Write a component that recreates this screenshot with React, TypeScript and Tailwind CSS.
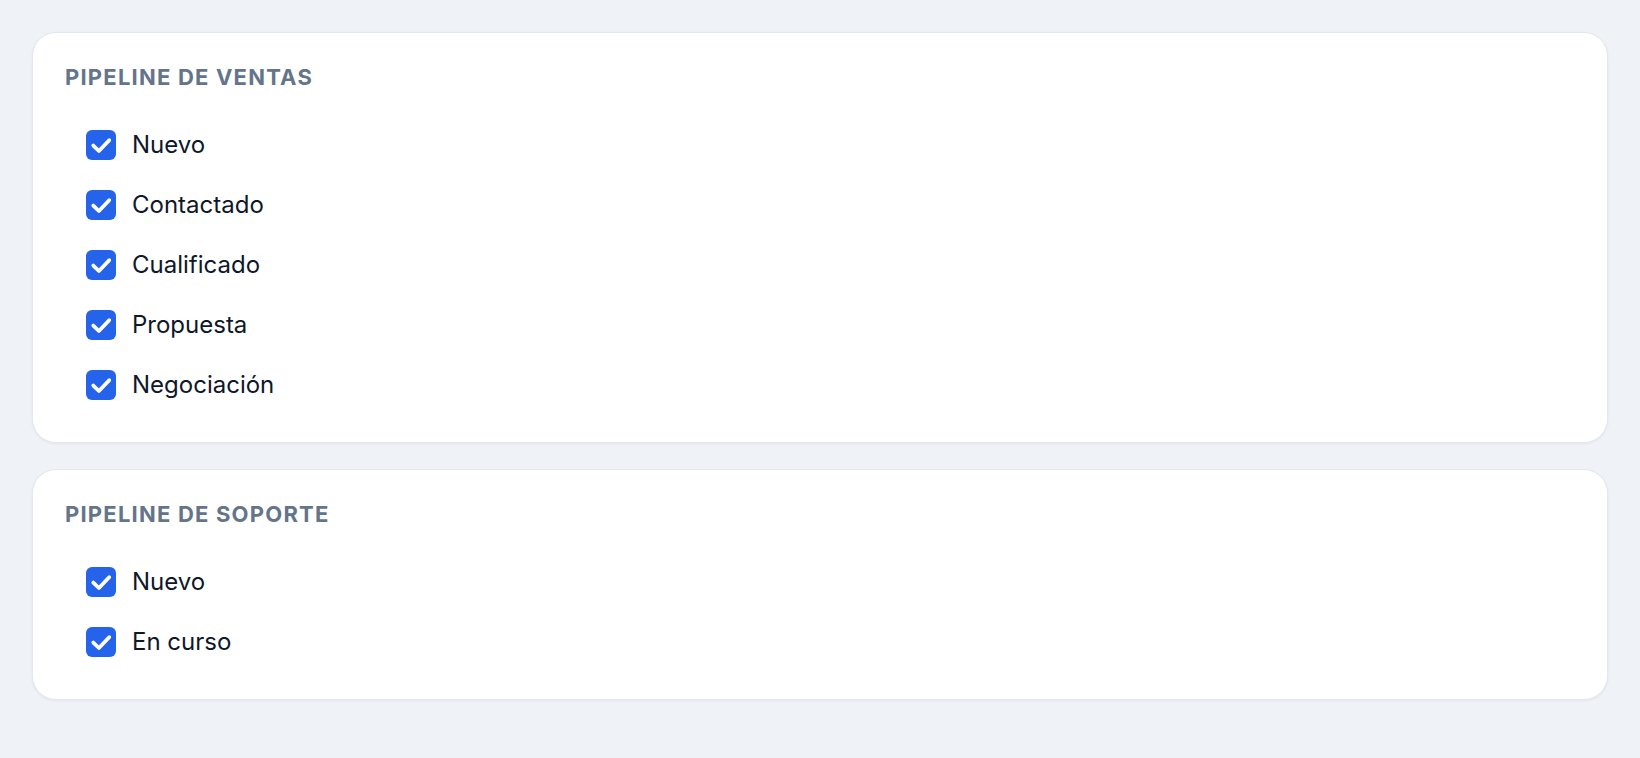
import React from 'react';

const pipelines = [
  { title: 'Pipeline de ventas', stages: ['Nuevo', 'Contactado', 'Cualificado', 'Propuesta', 'Negociación'] },
  { title: 'Pipeline de soporte', stages: ['Nuevo', 'En curso'] },
];

function CheckBox() {
  return (
    <span className="flex h-[30px] w-[30px] shrink-0 items-center justify-center rounded-[6px] bg-[#2563eb]">
      <svg viewBox="0 0 30 30" className="h-[30px] w-[30px]" fill="none">
        <path d="M7.3 15.6L12.9 21L23.2 10.2" stroke="white" strokeWidth="3.8" strokeLinecap="round" strokeLinejoin="round" />
      </svg>
    </span>
  );
}

export default function App() {
  return (
    <div className="min-h-[758px] bg-[#eff3f8] p-8 font-['Inter','Noto_Sans',sans-serif]">
      <div className="flex flex-col gap-[26px]">
        {pipelines.map((p) => (
          <section key={p.title} className="rounded-[24px] border border-[#e2e8f0] bg-white px-8 pt-8 pb-[33px] shadow-[0_1px_3px_rgba(15,23,42,0.06)]">
            <h3 className="mb-8 text-[22px] leading-6 font-bold uppercase tracking-[0.055em] text-[#64748b]">
              {p.title}
            </h3>
            <div className="flex flex-col gap-3">
              {p.stages.map((s) => (
                <label key={s} className="flex h-12 items-center gap-4 px-[21px] text-[24px] text-[#0f172a]">
                  <CheckBox />
                  <span>{s}</span>
                </label>
              ))}
            </div>
          </section>
        ))}
      </div>
    </div>
  );
}
